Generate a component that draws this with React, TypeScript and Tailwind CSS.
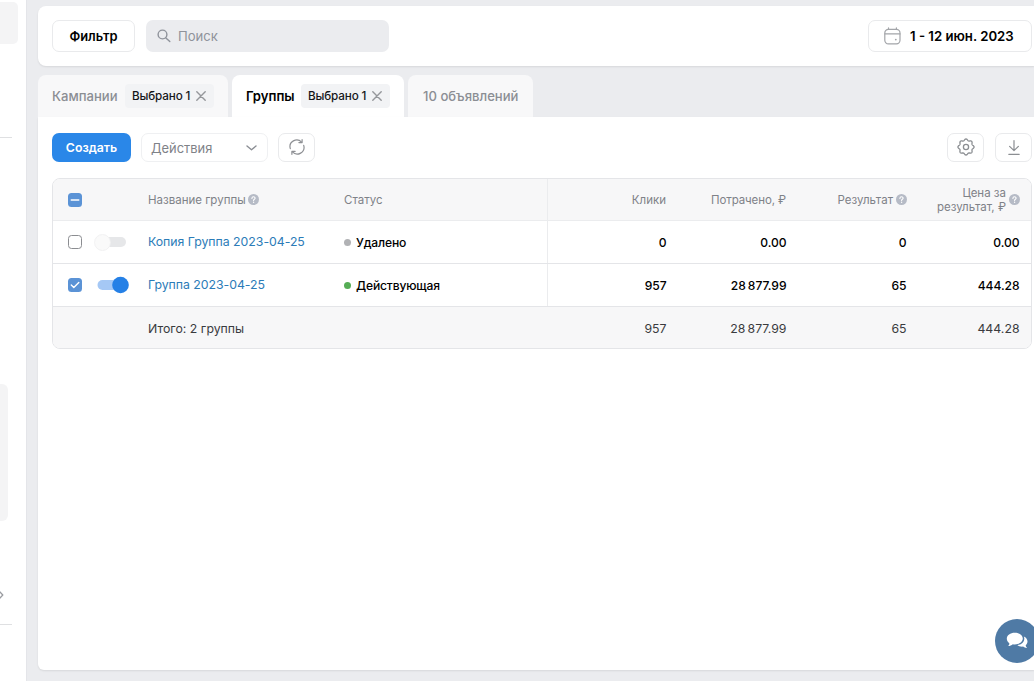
import { clsx } from 'clsx';
import type { ReactNode } from 'react';

type Row = {
  name: string;
  status: string;
  active: boolean;
  values: string[];
};

const rows: Row[] = [
  {
    name: 'Копия Группа 2023-04-25',
    status: 'Удалено',
    active: false,
    values: ['0', '0.00', '0', '0.00'],
  },
  {
    name: 'Группа 2023-04-25',
    status: 'Действующая',
    active: true,
    values: ['957', '28\u2009877.99', '65', '444.28'],
  },
];

const totals = ['957', '28\u2009877.99', '65', '444.28'];

const gridCols = 'grid grid-cols-[95px_196px_204px_130px_120px_120px_113px]';

// eight soft teeth around the centre of an 18x18 box
const gearPoints = Array.from({ length: 96 }, (_, i) => {
  const angle = (i / 96) * Math.PI * 2;
  const r = 7.3 + 0.75 * Math.cos(8 * angle);
  return `${(9 + r * Math.sin(angle)).toFixed(2)},${(9 - r * Math.cos(angle)).toFixed(2)}`;
}).join(' ');

function CloseIcon() {
  return (
    <svg
      width="10"
      height="10"
      viewBox="0 0 10 10"
      fill="none"
      stroke="#95979b"
      strokeWidth="1.4"
      strokeLinecap="round"
    >
      <path d="M0.8 0.8l8.4 8.4M9.2 0.8L0.8 9.2" />
    </svg>
  );
}

function HelpIcon() {
  return (
    <svg width="11" height="11" viewBox="0 0 11 11" className="shrink-0">
      <circle cx="5.5" cy="5.5" r="5.5" fill="#b6bbc6" />
      <path
        d="M3.9 4.4c0-1 .7-1.6 1.6-1.6s1.6.6 1.6 1.4c0 1.1-1.5 1.1-1.5 2.2"
        fill="none"
        stroke="#fff"
        strokeWidth="1.1"
        strokeLinecap="round"
      />
      <circle cx="5.6" cy="8.3" r="0.7" fill="#fff" />
    </svg>
  );
}

function IconButton({ children }: { children: ReactNode }) {
  return (
    <button className="flex h-[29px] w-[37px] items-center justify-center rounded-[7px] border border-[#e9eaec] bg-white pb-px">
      {children}
    </button>
  );
}

function Selected() {
  return (
    <span className="flex h-6 w-[89px] items-center justify-between rounded bg-[#f2f3f5] pr-2 pl-[7px] text-[11.7px] font-medium tracking-[-0.15px] text-[#16171a]">
      <span className="pt-px">Выбрано 1</span>
      <CloseIcon />
    </span>
  );
}

function Checkbox({ state }: { state: 'off' | 'on' | 'mixed' }) {
  return (
    <span
      className={clsx(
        'flex size-[14px] items-center justify-center rounded-[3.5px]',
        state === 'off' ? 'border border-[#8b8d91] bg-white' : 'bg-[#5b93d6]',
      )}
    >
      {state !== 'off' && (
        <svg
          width="10"
          height="10"
          viewBox="0 0 10 10"
          fill="none"
          stroke="#fff"
          strokeWidth="1.4"
          strokeLinecap="round"
          strokeLinejoin="round"
        >
          <path d={state === 'on' ? 'M1.3 5.1l2.5 2.4 5-4.9' : 'M1.2 5h7.6'} />
        </svg>
      )}
    </span>
  );
}

function Toggle({ on }: { on: boolean }) {
  return (
    <svg width="36" height="20" viewBox="0 0 36 20" className="shrink-0">
      <rect
        x="4.5"
        y="5"
        width="28.5"
        height="10"
        rx="5"
        fill={on ? '#a5c8f5' : '#e6e7e9'}
      />
      {on ? (
        <circle cx="27.5" cy="10" r="8.3" fill="#2580e6" />
      ) : (
        <circle
          cx="9.5"
          cy="10.5"
          r="8"
          fill="#fafafa"
          stroke="#efeff0"
          strokeWidth="0.8"
        />
      )}
    </svg>
  );
}

function Sidebar() {
  return (
    <aside className="flex w-[26px] shrink-0 flex-col overflow-hidden bg-white">
      <div className="mt-0.5 h-[42px] w-[18px] rounded-r-[5px] bg-[#f4f4f5]" />
      <div className="mt-[93px] h-px w-3 bg-[#dfe0e2]" />
      <div className="mt-[246px] h-[137px] w-2 rounded-r-md bg-[#f4f4f5]" />
      <svg
        className="mt-[70px]"
        width="4"
        height="8"
        viewBox="0 0 4 8"
        fill="none"
        stroke="#9a9ca1"
        strokeWidth="1.3"
        strokeLinecap="round"
        strokeLinejoin="round"
      >
        <path d="M0 1l2.8 3L0 7" />
      </svg>
      <div className="mt-[25px] h-px w-3 bg-[#dfe0e2]" />
    </aside>
  );
}

function TopBar() {
  return (
    <header className="flex h-[60px] items-center rounded-l-lg bg-white pr-0.5 pl-3.5 shadow-[0_1px_2px_rgba(0,0,0,0.09)]">
      <button className="h-8 w-[83px] rounded-[7px] border border-[#e9eaec] pt-0.5 text-[12.9px] font-semibold text-black">
        Фильтр
      </button>
      <div className="ml-[11px] flex h-8 w-[243px] items-center gap-[7px] rounded-[7px] bg-[#ebecef] pl-[11px] text-[13.1px] text-[#8f939b]">
        <svg
          width="14"
          height="14"
          viewBox="0 0 14 14"
          fill="none"
          stroke="#8f939b"
          strokeWidth="1.4"
          strokeLinecap="round"
        >
          <circle cx="5.5" cy="5.5" r="4.4" />
          <path d="M8.9 8.9l3.9 3.7" />
        </svg>
        <span className="pt-0.5">Поиск</span>
      </div>
      <button className="ml-auto flex h-8 w-[164px] items-center rounded-[7px] border border-[#e9eaec] pl-[15px] text-[13.2px] font-semibold whitespace-nowrap text-black">
        <svg
          className="mr-[9px]"
          width="17"
          height="18"
          viewBox="0 0 17 18"
          fill="none"
          stroke="#a3a5a9"
          strokeWidth="1.2"
          strokeLinecap="round"
        >
          <rect x="0.8" y="2.3" width="15.2" height="14.6" rx="3.6" />
          <path d="M1 6.9h15M4.5 0.8v1.5M12.4 0.8v1.5" />
          <circle cx="11.8" cy="12.6" r="0.9" fill="#a3a5a9" stroke="none" />
        </svg>
        <span className="pt-0.5">1 - 12 июн. 2023</span>
      </button>
    </header>
  );
}

function Tabs() {
  return (
    <nav className="mt-[9px] flex h-[42px] text-[13.1px] font-medium whitespace-nowrap text-[#8b8e94]">
      <div className="mr-1 flex w-[190px] items-center justify-between rounded-t-lg bg-[#f8f8f9] pr-[14px] pl-3.5">
        <span className="pt-0.5">Кампании</span>
        <Selected />
      </div>
      <div className="mr-1 flex w-[172px] items-center justify-between rounded-t-lg bg-white pr-[14px] pl-3.5 font-semibold text-black">
        <span className="pt-0.5">Группы</span>
        <Selected />
      </div>
      <div className="flex w-[125px] items-center rounded-t-lg bg-[#f8f8f9] pt-0.5 pl-[15px]">
        10 объявлений
      </div>
    </nav>
  );
}

function Toolbar() {
  return (
    <div className="flex h-[29px] items-center">
      <button className="h-[29px] w-[79px] rounded-[7px] bg-[#2a87e8] pt-0.5 text-[12.3px] font-semibold text-white">
        Создать
      </button>
      <button className="ml-2.5 flex h-[29px] w-[127px] items-center justify-between rounded-[7px] border border-[#eff0f2] pr-2.5 pl-[9px] text-[12.9px] text-[#7f8288]">
        <span className="pt-0.5">Действия</span>
        <svg
          width="11"
          height="6"
          viewBox="0 0 11 6"
          fill="none"
          stroke="#8b8e94"
          strokeWidth="1.4"
          strokeLinecap="round"
          strokeLinejoin="round"
        >
          <path d="M1 1l4.5 3.7L10 1" />
        </svg>
      </button>
      <div className="ml-2.5 flex">
        <IconButton>
          <svg
            width="18"
            height="16"
            viewBox="0 0 18 16"
            fill="none"
            stroke="#8e9094"
            strokeWidth="1.2"
            strokeLinecap="round"
            strokeLinejoin="round"
          >
            <path d="M2.3 9.6A6.7 6.7 0 0 1 13.6 3.1M15.7 6.4A6.7 6.7 0 0 1 4.4 12.9" />
            <path d="M10.9 3.6h3.2V0.7M7.1 12.4H3.9v2.9" />
          </svg>
        </IconButton>
      </div>
      <div className="ml-auto flex gap-[11px]">
        <IconButton>
          <svg
            width="18"
            height="18"
            viewBox="0 0 18 18"
            fill="none"
            stroke="#8b8e92"
            strokeWidth="1.3"
            strokeLinejoin="round"
          >
            <polygon points={gearPoints} />
            <circle cx="9" cy="9" r="2.6" />
          </svg>
        </IconButton>
        <IconButton>
          <svg
            width="14"
            height="17"
            viewBox="0 0 14 17"
            fill="none"
            stroke="#8b8e92"
            strokeWidth="1.2"
            strokeLinecap="round"
            strokeLinejoin="round"
          >
            <path d="M7 1.5v10M2.6 7.4L7 11.6l4.4-4.2M1.8 15.3h10.4" />
          </svg>
        </IconButton>
      </div>
    </div>
  );
}

function GroupsTable() {
  return (
    <div className="mt-4 h-[171px] w-[980px] overflow-hidden rounded-lg border border-[#e4e5e8] text-[12.3px] text-black">
      <div
        className={clsx(
          gridCols,
          'h-[42px] border-b border-[#ebecee] bg-[#f7f7f8] text-[11.5px] text-[#7f8288]',
        )}
      >
        <div className="flex items-center pl-[15px]">
          <Checkbox state="mixed" />
        </div>
        <div className="flex items-center gap-0.5">
          <span className="pt-0.5">Название группы</span>
          <HelpIcon />
        </div>
        <div className="flex items-center border-r border-[#ebecee] pt-0.5">
          Статус
        </div>
        <div className="flex items-center justify-end pt-0.5 pr-3">Клики</div>
        <div className="flex items-center justify-end pt-0.5 pr-3 tracking-[-0.1px]">
          Потрачено, ₽
        </div>
        <div className="flex items-center justify-end gap-[3px] pr-[11px]">
          <span className="pt-0.5">Результат</span>
          <HelpIcon />
        </div>
        <div className="flex items-center justify-end gap-[3px] pr-[11px] text-right leading-[14px]">
          <span className="pt-px">
            Цена за
            <br />
            результат, ₽
          </span>
          <HelpIcon />
        </div>
      </div>

      {rows.map((row) => (
        <div
          key={row.name}
          className={clsx(gridCols, 'h-[43px] border-b border-[#e4e5e8]')}
        >
          <div className="flex items-center gap-[11px] pl-[15px]">
            <Checkbox state={row.active ? 'on' : 'off'} />
            <Toggle on={row.active} />
          </div>
          <div className="flex items-center tracking-[-0.02px] whitespace-nowrap text-[#2c7cb8]">
            {row.name}
          </div>
          <div className="flex items-center gap-[5px] border-r border-[#ebecee]">
            <span
              className={clsx(
                'size-[7px] rounded-full',
                row.active ? 'bg-[#56ad55]' : 'bg-[#b1b2b5]',
              )}
            />
            <span className="pt-0.5 text-[12.1px] font-medium tracking-[-0.15px]">
              {row.status}
            </span>
          </div>
          {row.values.map((value, i) => (
            <div
              key={i}
              className="flex items-center justify-end pt-0.5 pr-[11.5px] text-[12.1px] font-medium tracking-[-0.05px]"
            >
              {value}
            </div>
          ))}
        </div>
      ))}

      <div
        className={clsx(gridCols, 'h-[43px] bg-[#f7f7f8] pt-px text-[#3a3b3e]')}
      >
        <div />
        <div className="flex items-center">Итого: 2 группы</div>
        <div />
        {totals.map((value, i) => (
          <div key={i} className="flex items-center justify-end pr-[11.5px]">
            {value}
          </div>
        ))}
      </div>
    </div>
  );
}

function ChatButton() {
  return (
    <button className="absolute top-[619px] left-[995px] flex size-11 items-center justify-center rounded-full bg-[#4f7aa5]">
      <svg width="22" height="18" viewBox="0 0 22 18" fill="#fff">
        <path d="M17.8 4.4c2.2.9 3.7 2.900 3.700 5.100 0 1.500-.7 2.800-1.800 3.800.1 1 .7 2 1.300 2.700-1.400.1-2.800-.5-3.900-1.400-2.300.2-4.400-.3-5.800-1.500 4.300-.4 7-3.200 7-6.600 0-.7-.2-1.400-.5-2.100z" />
        <path d="M8.800.7c4.500 0 8 2.600 8 5.900s-3.500 5.900-8 5.900c-.7 0-1.400-.1-2-.2-1.200 1.100-2.800 1.800-4.700 1.800.7-.8 1.300-1.700 1.300-2.700C1.800 10.300.8 8.600.8 6.600.8 3.300 4.300.7 8.800.7z" />
      </svg>
    </button>
  );
}

export default function App() {
  return (
    <div className="relative flex h-[681px] w-[1034px] overflow-hidden bg-[#ebecef] font-['Inter','Liberation_Sans',sans-serif]">
      <Sidebar />
      <div className="w-3 shrink-0 border-l border-[#e4e5e9]" />
      <main className="flex flex-1 flex-col pt-1.5 pb-[11px]">
        <TopBar />
        <Tabs />
        <section className="flex-1 rounded-bl-md bg-white pt-4 pr-0.5 pl-3.5 shadow-[0_1px_2px_rgba(0,0,0,0.09)]">
          <Toolbar />
          <GroupsTable />
        </section>
      </main>
      <ChatButton />
    </div>
  );
}
